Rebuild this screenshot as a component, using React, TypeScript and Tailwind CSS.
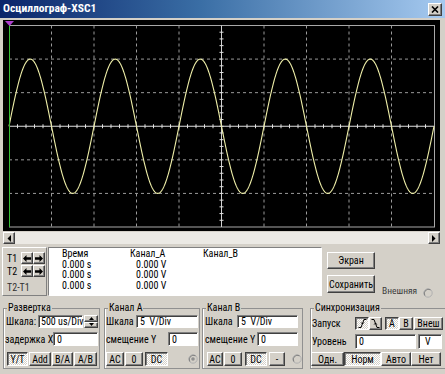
import React from "react";

const raised =
  "border border-t-white border-l-white border-r-[#404040] border-b-[#404040] shadow-[inset_-1px_-1px_0_#808080] bg-[#d4d0c8]";
const pressed =
  "border border-t-[#404040] border-l-[#404040] border-r-white border-b-white shadow-[inset_1px_1px_0_#808080] bg-[repeating-conic-gradient(#ffffff_0%_25%,#d4d0c8_0%_50%)] [background-size:2px_2px]";
const sunken =
  "border border-t-[#808080] border-l-[#808080] border-r-white border-b-white shadow-[inset_1px_1px_0_#404040] bg-white";

function Btn({ w, label, on, cls = "" }: { w: string; label: React.ReactNode; on?: boolean; cls?: string }) {
  return (
    <div className={`${on ? pressed : raised} ${w} h-full flex items-center justify-center shrink-0 whitespace-nowrap ${cls}`}>
      {label}
    </div>
  );
}

function Screen() {
  const x0 = 6,
    x1 = 431,
    y0 = 5.5,
    y1 = 207;
  const dx = (x1 - x0) / 10;
  const dy = (y1 - y0) / 6;
  const cy = y0 + 3 * dy;
  const cx = x0 + 5 * dx;
  const amp = 2 * dy;
  const period = 2 * dx;
  let d = "";
  for (let x = x0; x <= x1; x += 0.5) {
    const y = cy - amp * Math.sin((2 * Math.PI * (x - x0)) / period);
    d += (x === x0 ? "M" : "L") + x.toFixed(2) + " " + y.toFixed(2) + " ";
  }
  const vlines = [];
  for (let i = 1; i < 10; i++) {
    if (i === 5) continue;
    vlines.push(
      <line key={"v" + i} x1={x0 + i * dx} y1={y0} x2={x0 + i * dx} y2={y1} stroke="#9a9a9a" strokeWidth={1} strokeDasharray="3 3" />
    );
  }
  const hlines = [];
  for (let i = 1; i < 6; i++) {
    if (i === 3) continue;
    hlines.push(
      <line key={"h" + i} x1={x0} y1={y0 + i * dy} x2={x1} y2={y0 + i * dy} stroke="#9a9a9a" strokeWidth={1} strokeDasharray="3 3" />
    );
  }
  const ticksH = [];
  for (let i = 1; i < 50; i++) {
    const x = x0 + (i * dx) / 5;
    ticksH.push(<line key={"th" + i} x1={x} y1={cy - 2} x2={x} y2={cy + 2} stroke="#e0e0e0" strokeWidth={1} />);
  }
  const ticksV = [];
  for (let i = 1; i < 30; i++) {
    const y = y0 + (i * dy) / 5;
    ticksV.push(<line key={"tv" + i} x1={cx - 2} y1={y} x2={cx + 2} y2={y} stroke="#e0e0e0" strokeWidth={1} />);
  }
  return (
    <svg width={437} height={211} viewBox="0 0 437 211" className="block">
      <rect x={0} y={0} width={437} height={211} fill="#000" />
      <rect x={x0 + 0.5} y={y0} width={x1 - x0} height={y1 - y0} fill="none" stroke="#a8a8a8" strokeWidth={1} />
      {vlines}
      {hlines}
      <line x1={x0} y1={cy} x2={x1} y2={cy} stroke="#e0e0e0" strokeWidth={1} />
      <line x1={cx} y1={y0} x2={cx} y2={y1} stroke="#d0d0d0" strokeWidth={1} />
      {ticksH}
      {ticksV}
      <path d={d} fill="none" stroke="#eeeea8" strokeWidth={1.1} />
      <line x1={x0 + 0.5} y1={3} x2={x0 + 0.5} y2={y1} stroke="#38c038" strokeWidth={1} />
      <polygon points={`${x0 - 4},1 ${x0 + 5},1 ${x0 + 0.5},6`} fill="#b040d0" />
    </svg>
  );
}

function Spinner() {
  return (
    <div className="flex flex-col w-[14px] h-full ml-[1px] shrink-0">
      <div className={`${raised} flex-1 flex items-center justify-center`}>
        <svg width="5" height="3" viewBox="0 0 5 3"><polygon points="0,3 5,3 2.5,0" fill="#000" /></svg>
      </div>
      <div className={`${raised} flex-1 flex items-center justify-center`}>
        <svg width="5" height="3" viewBox="0 0 5 3"><polygon points="0,0 5,0 2.5,3" fill="#000" /></svg>
      </div>
    </div>
  );
}

function Radio({ dot, cls = "" }: { dot?: boolean; cls?: string }) {
  return (
    <svg width="10" height="10" viewBox="0 0 10 10" className={`shrink-0 ${cls}`}>
      <circle cx="5" cy="5" r="4.2" fill="#d4d0c8" stroke="#b0b0b0" strokeWidth="1" />
      <path d="M1.8 7.5 A4.2 4.2 0 0 1 7.5 1.8" fill="none" stroke="#808080" strokeWidth="1" />
      {dot && <circle cx="5" cy="5" r="1.8" fill="#909090" />}
    </svg>
  );
}

function Group({ title, w, cls = "", children }: { title: string; w: string; cls?: string; children: React.ReactNode }) {
  return (
    <fieldset className={`border border-[#909090] shadow-[inset_1px_0_0_#ffffff] ${w} h-[67px] shrink-0 flex flex-col ${cls}`}>
      <legend className="ml-[3px] px-[1px] leading-[12px] h-[12px] whitespace-nowrap">{title}</legend>
      {children}
    </fieldset>
  );
}

function Arrow({ dir }: { dir: "l" | "r" }) {
  return (
    <div className={`${raised} w-[12px] h-full flex items-center justify-center`}>
      <svg width="8" height="7" viewBox="0 0 8 7">
        {dir === "l" ? (
          <path d="M0 3.5 L3.5 0 V2.3 H8 V4.7 H3.5 V7 Z" fill="#000" />
        ) : (
          <path d="M8 3.5 L4.5 0 V2.3 H0 V4.7 H4.5 V7 Z" fill="#000" />
        )}
      </svg>
    </div>
  );
}

function EdgeIcon({ rising }: { rising: boolean }) {
  return (
    <svg width="9" height="9" viewBox="0 0 9 9">
      {rising ? (
        <path d="M0.5 8.5 H3 L6 0.5 H8.5 M3.2 3.5 L4.5 5 L5.8 3.5" fill="none" stroke="#000" strokeWidth="1" />
      ) : (
        <path d="M0.5 0.5 H3 L6 8.5 H8.5 M3.2 5.5 L4.5 4 L5.8 5.5" fill="none" stroke="#000" strokeWidth="1" />
      )}
    </svg>
  );
}

function Label({ w, children, cls = "" }: { w: string; children: React.ReactNode; cls?: string }) {
  return <span className={`${w} shrink-0 whitespace-nowrap ${cls}`}>{children}</span>;
}

export default function App() {
  return (
    <div className="w-[445px] h-[374px] bg-[#d4d0c8] flex flex-col overflow-hidden text-[10px] text-black font-['Roboto',sans-serif] font-stretch-[75%]">
      {/* title bar */}
      <div className="h-[18px] shrink-0 flex items-center justify-between pl-[3px] pr-[3px] bg-[linear-gradient(to_right,#0a246a,#3a6ea5_45%,#a6caf0)]">
        <span className="text-white font-bold text-[11.5px] leading-none">Осциллограф-XSC1</span>
        <div className={`${raised} w-[14px] h-[13px] flex items-center justify-center`}>
          <svg width="8" height="7" viewBox="0 0 8 7">
            <path d="M1 0.5 L7 6.5 M7 0.5 L1 6.5" stroke="#000" strokeWidth="1.6" />
          </svg>
        </div>
      </div>

      {/* screen */}
      <div className="mt-[2px] ml-[3px] w-[437px] h-[211px] shrink-0">
        <Screen />
      </div>

      {/* scrollbar */}
      <div className="mt-[1px] ml-[3px] w-[437px] h-[12px] shrink-0 flex bg-[#ebe9e4]">
        <div className={`${raised} w-[12px] h-full flex items-center justify-center`}>
          <svg width="4" height="7" viewBox="0 0 4 7"><polygon points="4,0 4,7 0.5,3.5" fill="#000" /></svg>
        </div>
        <div className="flex-1" />
        <div className={`${raised} w-[12px] h-full flex items-center justify-center`}>
          <svg width="4" height="7" viewBox="0 0 4 7"><polygon points="0,0 0,7 3.5,3.5" fill="#000" /></svg>
        </div>
      </div>

      {/* cursor readout row */}
      <div className="mt-[3px] h-[49px] shrink-0 flex">
        <div className="ml-[2px] w-[45px] h-full border border-t-white border-l-white border-r-[#808080] border-b-[#808080] flex flex-col pl-[4px] pt-[4px]">
          <div className="flex items-center h-[12px]">
            <Label w="w-[14px]">T1</Label>
            <div className="flex h-full">
              <Arrow dir="l" />
              <Arrow dir="r" />
            </div>
          </div>
          <div className="flex items-center h-[12px] mt-[1px]">
            <Label w="w-[14px]">T2</Label>
            <div className="flex h-full">
              <Arrow dir="l" />
              <Arrow dir="r" />
            </div>
          </div>
          <div className="mt-[3px] text-[#303030] whitespace-nowrap">T2-T1</div>
        </div>
        <div className="ml-[1px] w-[274px] h-full bg-white border border-t-[#808080] border-l-[#808080] border-r-white border-b-white pt-[1px] pl-[13px] leading-[10.5px]">
          <div className="grid grid-cols-[68px_73px_auto] whitespace-nowrap">
            <span>Время</span>
            <span>Канал_A</span>
            <span>Канал_B</span>
            <span>0.000 s</span>
            <span className="pl-[6px]">0.000 V</span>
            <span></span>
            <span>0.000 s</span>
            <span className="pl-[6px]">0.000 V</span>
            <span></span>
            <span>0.000 s</span>
            <span className="pl-[6px]">0.000 V</span>
            <span></span>
          </div>
        </div>
        <div className="ml-[5px] w-[48px] flex flex-col shrink-0">
          <div className={`${raised} mt-[5px] h-[17px] flex items-center justify-center`}>Экран</div>
          <div className={`${raised} mt-[6px] h-[18px] flex items-center justify-center whitespace-nowrap`}>Сохранить</div>
        </div>
        <div className="ml-[7px] flex items-end translate-y-[2px]">
          <span className="text-[9.5px] text-[#404040] whitespace-nowrap">Внешняя</span>
          <Radio cls="ml-[6px]" />
        </div>
      </div>

      {/* control groups */}
      <div className="mt-[6px] flex">
        <Group title="Развертка" w="w-[97px]" cls="ml-[3px]">
          <div className="mt-[1px] h-[13px] flex items-center">
            <Label w="w-[34px]" cls="pl-[2px]">Шкала:</Label>
            <div className={`${sunken} w-[45px] h-full flex items-center pl-[2px] leading-none whitespace-nowrap`}>500 us/Div</div>
            <Spinner />
          </div>
          <div className="mt-[4px] h-[14px] flex items-center">
            <Label w="w-[49px]" cls="pl-[1px]">задержка X</Label>
            <div className={`${sunken} w-[45px] h-full flex items-center pl-[3px]`}>0</div>
          </div>
          <div className="mt-[6px] h-[14px] flex pl-[3px]">
            <Btn w="w-[21px]" label="Y/T" on />
            <Btn w="w-[22px]" label="Add" cls="ml-[1px]" />
            <Btn w="w-[21px]" label="B/A" cls="ml-[1px]" />
            <Btn w="w-[23px]" label="A/B" cls="ml-[1px]" />
          </div>
        </Group>

        <Group title="Канал A" w="w-[96px]" cls="ml-[4px]">
          <div className="mt-[1px] h-[13px] flex items-center">
            <Label w="w-[31px]" cls="pl-[1px]">Шкала</Label>
            <div className={`${sunken} w-[62px] h-full flex items-center pl-[3px] whitespace-pre`}>5  V/Div</div>
          </div>
          <div className="mt-[4px] h-[14px] flex items-center">
            <Label w="w-[63px]" cls="pl-[1px]">смещение Y</Label>
            <div className={`${sunken} w-[30px] h-full flex items-center pl-[3px]`}>0</div>
          </div>
          <div className="mt-[6px] h-[14px] flex items-center">
            <Btn w="w-[18px]" label="AC" cls="ml-[1px]" />
            <Btn w="w-[18px]" label="0" cls="ml-[1px]" />
            <Btn w="w-[23px]" label="DC" on cls="ml-[2px]" />
            <Radio dot cls="ml-[20px]" />
          </div>
        </Group>

        <Group title="Канал B" w="w-[98px]" cls="ml-[2px]">
          <div className="mt-[1px] h-[13px] flex items-center">
            <Label w="w-[34px]" cls="pl-[2px]">Шкала</Label>
            <div className={`${sunken} w-[61px] h-full flex items-center pl-[3px] whitespace-pre`}>5  V/Div</div>
          </div>
          <div className="mt-[4px] h-[14px] flex items-center">
            <Label w="w-[54px]" cls="pl-[2px]">смещение Y</Label>
            <div className={`${sunken} w-[41px] h-full flex items-center pl-[3px]`}>0</div>
          </div>
          <div className="mt-[6px] h-[14px] flex items-center">
            <Btn w="w-[16px]" label="AC" cls="ml-[4px]" />
            <Btn w="w-[18px]" label="0" cls="ml-[1px]" />
            <Btn w="w-[22px]" label="DC" on cls="ml-[3px]" />
            <Btn w="w-[16px]" label="-" cls="ml-[2px]" />
            <Radio cls="ml-[7px]" />
          </div>
        </Group>

        <Group title="Синхронизация" w="w-[136px]" cls="ml-[7px]">
          <div className="mt-[3px] h-[13px] flex items-center">
            <Label w="w-[44px]" cls="pl-[1px]">Запуск</Label>
            <Btn w="w-[14px]" label={<EdgeIcon rising />} on />
            <Btn w="w-[13px]" label={<EdgeIcon rising={false} />} />
            <Btn w="w-[14px]" label="A" on cls="ml-[3px]" />
            <Btn w="w-[14px]" label="B" />
            <Btn w="w-[29px]" label="Внеш" cls="ml-[1px]" />
          </div>
          <div className="mt-[4px] h-[15px] flex items-center">
            <Label w="w-[44px]" cls="pl-[1px]">Уровень</Label>
            <div className={`${sunken} w-[61px] h-full flex items-center pl-[3px]`}>0</div>
            <div className={`${sunken} w-[24px] ml-[2px] h-full flex items-center pl-[6px]`}>V</div>
          </div>
          <div className="mt-[3px] h-[14px] flex items-center">
            <Btn w="w-[33px]" label="Одн." />
            <Btn w="w-[37px]" label="Норм" on />
            <Btn w="w-[30px]" label="Авто" />
            <Btn w="w-[30px]" label="Нет" />
          </div>
        </Group>
      </div>
    </div>
  );
}
